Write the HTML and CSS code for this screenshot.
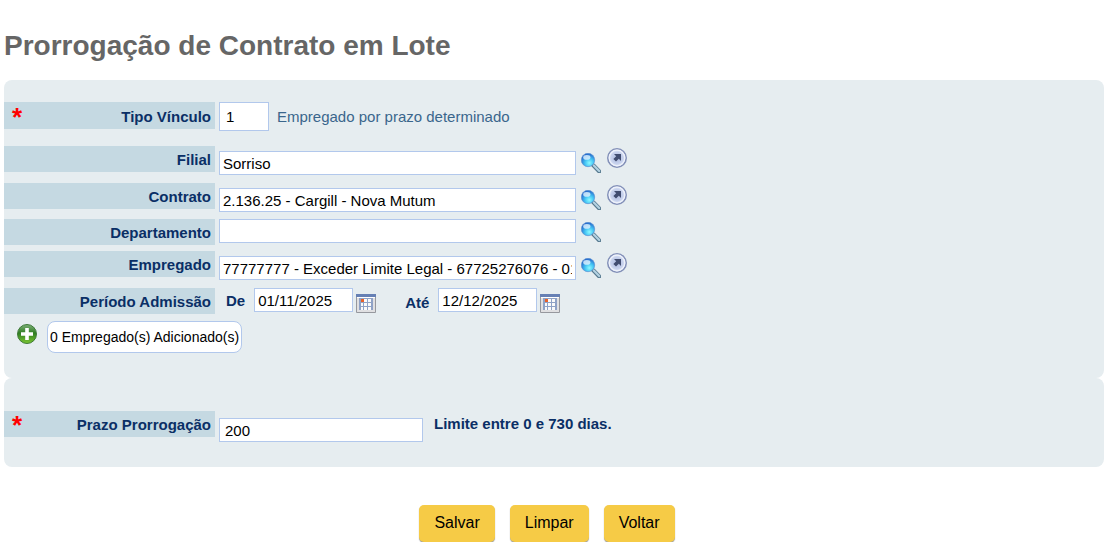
FILE: index.html
```
<!DOCTYPE html>
<html lang="pt-BR">
<head>
    <meta charset="UTF-8">
    <meta name="viewport" content="width=device-width, initial-scale=1.0">
    <title>Prorrogação de Contrato em Lote</title>
    <link rel="stylesheet" href="styles.css">
</head>
<body>
    <!-- Shared icons -->
    <svg class="icon-defs" aria-hidden="true">
        <defs>
            <radialGradient id="lensFill" cx="60%" cy="72%" r="70%">
                <stop offset="0" stop-color="#8cfaff"/>
                <stop offset="0.45" stop-color="#45c6f5"/>
                <stop offset="1" stop-color="#2563c8"/>
            </radialGradient>
            <radialGradient id="openFill" cx="50%" cy="50%" r="50%">
                <stop offset="0" stop-color="#aebbdf"/>
                <stop offset="0.6" stop-color="#c5d0ec"/>
                <stop offset="1" stop-color="#e6ecfa"/>
            </radialGradient>
            <linearGradient id="addFill" x1="0" y1="0" x2="0" y2="1">
                <stop offset="0" stop-color="#7fb07a"/>
                <stop offset="0.45" stop-color="#2f7d22"/>
                <stop offset="1" stop-color="#7cc832"/>
            </linearGradient>
            <symbol id="search" viewBox="0 0 20 20">
                <path d="M12.4 12.4l5.8 6" stroke="#55788e" stroke-width="4.2" stroke-linecap="round"/>
                <path d="M12.8 12.4l5.4 5.6" stroke="#b4d2e2" stroke-width="2.2" stroke-linecap="round"/>
                <circle cx="7" cy="7" r="6.7" fill="url(#lensFill)" stroke="#5a94d4" stroke-width="0.7"/>
                <ellipse cx="5.8" cy="4.4" rx="3.6" ry="2.4" fill="#e2f3ff" opacity="0.8"/>
            </symbol>
            <symbol id="open" viewBox="0 0 20 20">
                <circle cx="10" cy="10" r="9.2" fill="url(#openFill)" stroke="#8390b8" stroke-width="1.6"/>
                <circle cx="10" cy="10" r="7.8" fill="none" stroke="#eef2fb" stroke-width="1.2"/>
                <path d="M7 6h7v7l-2.2-2.2L9 13.6 6.4 11l2.8-2.8z" fill="#414d70"/>
            </symbol>
            <symbol id="calendar" viewBox="0 0 20 20">
                <path d="M0.5 0.5h19v18h-19z" fill="#e0e0e2" stroke="#96989e"/>
                <path d="M0 0h20v3H0z" fill="#6680b4"/>
                <path d="M1 3h18v1H1z" fill="#fff"/>
                <path d="M3 4h14v12H3z" fill="#8fa2c6"/>
                <path d="M5 5h2v3H5zM8 5h3v3H8zM12 5h3v3h-3zM5 9h2v3H5zM8 9h3v3H8zM12 9h3v3h-3zM5 13h2v3H5zM8 13h3v3H8zM12 13h3v3h-3z" fill="#fafafa"/>
                <path d="M5 5h3v3H5z" fill="#e8622a"/>
            </symbol>
            <symbol id="add" viewBox="0 0 20 20">
                <circle cx="10" cy="10" r="9.5" fill="url(#addFill)" stroke="#3e7a38"/>
                <path d="M8.2 4h3.6v4.2H16v3.6h-4.2V16H8.2v-4.2H4V8.2h4.2z" fill="#fff"/>
            </symbol>
        </defs>
    </svg>

    <h1>Prorrogação de Contrato em Lote</h1>

    <form action="#">
        <div class="panel">
            <div class="row row-type">
                <label class="field-label" for="tipo"><span class="required">*</span>Tipo Vínculo</label>
                <input class="input-code" id="tipo" type="text" value="1">
                <span class="description">Empregado por prazo determinado</span>
            </div>
            <div class="row row-lookup">
                <label class="field-label" for="filial">Filial</label>
                <input class="input-lookup" id="filial" type="text" value="Sorriso">
                <button type="button" class="icon-button" aria-label="Pesquisar filial"><svg><use href="#search"/></svg></button>
                <a href="#" class="open-link" aria-label="Abrir filial"><svg><use href="#open"/></svg></a>
            </div>
            <div class="row row-lookup">
                <label class="field-label" for="contrato">Contrato</label>
                <input class="input-lookup" id="contrato" type="text" value="2.136.25 - Cargill - Nova Mutum">
                <button type="button" class="icon-button" aria-label="Pesquisar contrato"><svg><use href="#search"/></svg></button>
                <a href="#" class="open-link" aria-label="Abrir contrato"><svg><use href="#open"/></svg></a>
            </div>
            <div class="row row-plain">
                <label class="field-label" for="departamento">Departamento</label>
                <input class="input-lookup" id="departamento" type="text">
                <button type="button" class="icon-button" aria-label="Pesquisar departamento"><svg><use href="#search"/></svg></button>
            </div>
            <div class="row row-lookup">
                <label class="field-label" for="empregado">Empregado</label>
                <input class="input-lookup" id="empregado" type="text" value="77777777 - Exceder Limite Legal - 67725276076 - 01/11/2025">
                <button type="button" class="icon-button" aria-label="Pesquisar empregado"><svg><use href="#search"/></svg></button>
                <a href="#" class="open-link" aria-label="Abrir empregado"><svg><use href="#open"/></svg></a>
            </div>
            <div class="row row-period">
                <span class="field-label">Período Admissão</span>
                <label class="date-label" for="de">De</label>
                <input class="input-date" id="de" type="text" value="01/11/2025">
                <button type="button" class="icon-button" aria-label="Calendário inicial"><svg><use href="#calendar"/></svg></button>
                <label class="date-label date-label-end" for="ate">Até</label>
                <input class="input-date" id="ate" type="text" value="12/12/2025">
                <button type="button" class="icon-button" aria-label="Calendário final"><svg><use href="#calendar"/></svg></button>
            </div>
            <div class="added">
                <button type="button" class="icon-button" aria-label="Adicionar empregado"><svg><use href="#add"/></svg></button>
                <button type="button" class="added-count">0 Empregado(s) Adicionado(s)</button>
            </div>
        </div>

        <div class="panel panel-term">
            <div class="row row-term">
                <label class="field-label" for="prazo"><span class="required">*</span>Prazo Prorrogação</label>
                <input class="input-term" id="prazo" type="text" value="200">
                <span class="hint">Limite entre 0 e 730 dias.</span>
            </div>
        </div>

        <div class="actions">
            <button type="submit">Salvar</button>
            <button type="reset">Limpar</button>
            <button type="button">Voltar</button>
        </div>
    </form>
</body>
</html>
```
FILE: styles.css
```
* {
    box-sizing: border-box;
}

body {
    margin: 0 11px 0 4px;
    font-family: "Liberation Sans", Arial, sans-serif;
    font-size: 15px;
    color: #0a2f66;
    background-color: #fff;
}

h1 {
    margin: 0;
    padding: 29px 0 17px;
    font-size: 28px;
    line-height: 34px;
    color: #666;
}

input,
button {
    font-family: inherit;
    font-size: 15px;
    color: #000;
}

svg {
    display: block;
    width: 20px;
    height: 20px;
}

.icon-defs {
    position: absolute;
    width: 0;
    height: 0;
}

/* Panels */
.panel {
    padding: 22px 0 25px;
    background-color: #e6edf0;
    border-radius: 8px;
}

.panel-term {
    padding-top: 33px;
}

/* Form rows */
.row {
    display: flex;
    align-items: flex-start;
    margin-bottom: 8px;
}

.field-label {
    display: flex;
    justify-content: flex-end;
    width: 211px;
    height: 26px;
    margin-right: 4px;
    padding-right: 4px;
    line-height: 28px;
    font-weight: bold;
    background-color: #c5d9e2;
}

.required {
    margin: 0 auto 0 8px;
    font-size: 26px;
    color: #f00;
}

.row input {
    height: 24px;
    padding: 0 3px;
    border: 1px solid #b2c8ec;
    background-color: #fff;
}

.row .input-code {
    width: 50px;
    height: 29px;
    padding: 0 6px;
}

.input-lookup {
    width: 357px;
}

.input-date {
    width: 99px;
}

.row .input-term {
    width: 204px;
    padding: 0 5px;
}

.description {
    margin-left: 8px;
    line-height: 29px;
    color: #3a668c;
}

.icon-button {
    padding: 0;
    border: none;
    background: none;
    cursor: pointer;
}

.row .icon-button {
    margin: 3px 0 0 5px;
}

.open-link {
    margin: 2px 0 0 6px;
}

.row-type {
    margin-bottom: 15px;
}

.row-type .field-label {
    height: 27px;
    line-height: 30px;
}

.row-lookup input {
    margin-top: 5px;
}

.row-lookup .icon-button {
    margin-top: 7px;
}

.row-plain {
    margin-bottom: 6px;
}

.row-lookup + .row-lookup {
    margin-bottom: 7px;
}

/* Admission period */
.row-period {
    margin-bottom: 3px;
}

.date-label {
    margin: 0 9px 0 7px;
    line-height: 26px;
    font-weight: bold;
}

.date-label-end {
    margin-left: 29px;
    line-height: 30px;
}

.row-period .icon-button {
    margin: 6px 0 0 3px;
}

.added {
    display: flex;
    align-items: flex-start;
    gap: 10px;
    padding-left: 13px;
}

.added .icon-button {
    margin-top: 3px;
}

.added-count {
    height: 32px;
    padding: 0 2px;
    font-size: 14px;
    border: 1px solid #b2c8ec;
    border-radius: 8px;
    background-color: #fff;
}

/* Extension term */
.row-term {
    margin-bottom: 0;
}

.row-term input {
    margin-top: 7px;
}

.hint {
    margin-left: 11px;
    line-height: 26px;
    font-weight: bold;
}

/* Form buttons */
.actions {
    display: flex;
    justify-content: center;
    gap: 15px;
    padding: 38px 14px 0 0;
}

.actions button {
    height: 37px;
    padding: 0 15px 2px;
    font-size: 16px;
    border: none;
    border-radius: 5px;
    background-color: #f6cb46;
    box-shadow: 0 1px 1px #999;
    cursor: pointer;
}
```
